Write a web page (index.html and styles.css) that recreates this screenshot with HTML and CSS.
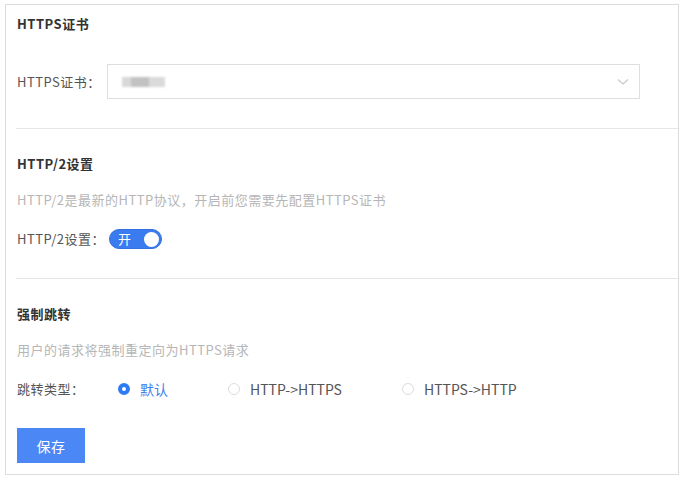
FILE: index.html
```html
<!DOCTYPE html>
<html lang="zh-CN">
<head>
<meta charset="utf-8">
<title>HTTPS设置</title>
<link rel="stylesheet" href="styles.css">
</head>
<body>
<div class="card">
  <section class="section s1">
    <h3 class="title">HTTPS证书</h3>
    <div class="row select-row">
      <span class="label">HTTPS证书：</span>
      <div class="select">
        <span class="blurred"><i class="b1"></i><i class="b2"></i><i class="b3"></i></span>
        <svg class="chev" width="12" height="8" viewBox="0 0 12 8"><path d="M1 1.5 L6 6 L11 1.5" fill="none" stroke="#c8c8c8" stroke-width="1.2"/></svg>
      </div>
    </div>
  </section>
  <div class="divider d1"></div>
  <section class="section s2">
    <h3 class="title">HTTP/2设置</h3>
    <p class="desc">HTTP/2是最新的HTTP协议，开启前您需要先配置HTTPS证书</p>
    <div class="row toggle-row">
      <span class="label-inline">HTTP/2设置：</span>
      <span class="switch"><span class="switch-text">开</span><span class="knob"></span></span>
    </div>
  </section>
  <div class="divider d2"></div>
  <section class="section s3">
    <h3 class="title">强制跳转</h3>
    <p class="desc">用户的请求将强制重定向为HTTPS请求</p>
    <div class="row radio-row">
      <span class="label radio-label">跳转类型：</span>
      <div class="radios">
        <label class="radio checked"><span class="dot"></span><span class="rtext">默认</span></label>
        <label class="radio"><span class="dot"></span><span class="rtext">HTTP-&gt;HTTPS</span></label>
        <label class="radio"><span class="dot"></span><span class="rtext">HTTPS-&gt;HTTP</span></label>
      </div>
    </div>
    <button class="btn">保存</button>
  </section>
</div>
</body>
</html>
```
FILE: styles.css
```css
html, body {
  margin: 0;
  padding: 0;
  background: #fff;
}
body {
  font-family: "Noto Sans CJK SC", "Noto Sans", sans-serif;
  font-size: 13px;
  letter-spacing: 0.5px;
  color: #555;
}
.card {
  box-sizing: border-box;
  margin: 4px 0 0 5px;
  width: 674px;
  height: 471px;
  border: 1px solid #dcdcdc;
  padding: 9px 0 10px 0;
  display: flex;
  flex-direction: column;
}
.section {
  padding-left: 11px;
  display: flex;
  flex-direction: column;
}
.title {
  margin: 0;
  font-size: 13px;
  line-height: 20px;
  font-weight: 700;
  color: #333;
}
.row {
  display: flex;
  align-items: center;
}
.select-row {
  margin-top: 30px;
}
.label {
  width: 90px;
  flex: none;
  line-height: 20px;
}
.select {
  box-sizing: border-box;
  width: 533px;
  height: 35px;
  border: 1px solid #dedede;
  display: flex;
  align-items: center;
  justify-content: space-between;
  padding: 0 10px 0 14px;
}
.blurred {
  display: flex;
  align-items: center;
  filter: blur(1.2px);
  height: 12px;
}
.blurred i {
  display: block;
  height: 10px;
}
.b1 { width: 9px; background: #d8d8d8; }
.b2 { width: 18px; background: #c2c2c2; }
.b3 { width: 16px; background: #dadada; }
.chev {
  display: block;
}
.divider {
  height: 1px;
  background: #e6e6e6;
  margin-left: 10px;
}
.d1 { margin-top: 29px; }
.s2 { margin-top: 25px; }
.desc {
  margin: 16px 0 0 0;
  line-height: 20px;
  color: #b6b6b6;
}
.toggle-row {
  margin-top: 19px;
  height: 20px;
}
.label-inline {
  line-height: 20px;
  margin-right: 4px;
}
.switch {
  box-sizing: border-box;
  width: 53px;
  height: 20px;
  border-radius: 10px;
  background: #3b7bf0;
  border: 1px solid #3570e0;
  display: flex;
  align-items: center;
  justify-content: space-between;
  padding: 0 2px 0 8px;
}
.switch-text {
  color: #fff;
  font-size: 13px;
  line-height: 18px;
  letter-spacing: 0;
}
.knob {
  width: 15px;
  height: 15px;
  border-radius: 50%;
  background: #fff;
}
.d2 { margin-top: 29px; }
.s3 { margin-top: 25px; }
.radio-row {
  margin-top: 19px;
  height: 20px;
}
.radio-label {
  width: 101px;
}
.radios {
  display: flex;
  align-items: center;
  gap: 60px;
}
.radio {
  display: flex;
  align-items: center;
  gap: 10px;
  font-size: 14px;
  letter-spacing: 0;
  color: #555;
}
.dot {
  box-sizing: border-box;
  width: 12px;
  height: 12px;
  border-radius: 50%;
  border: 1px solid #dcdcdc;
  background: #fff;
}
.radio.checked .dot {
  border: 4px solid #2d7cf6;
  background: #fff;
}
.radio.checked .rtext {
  color: #3b82f0;
}
.btn {
  margin-top: 29px;
  align-self: flex-start;
  width: 68px;
  height: 35px;
  border: none;
  background: #4c88f5;
  color: #fff;
  font-family: inherit;
  font-size: 14px;
  letter-spacing: 0.5px;
  padding: 0;
}
```
